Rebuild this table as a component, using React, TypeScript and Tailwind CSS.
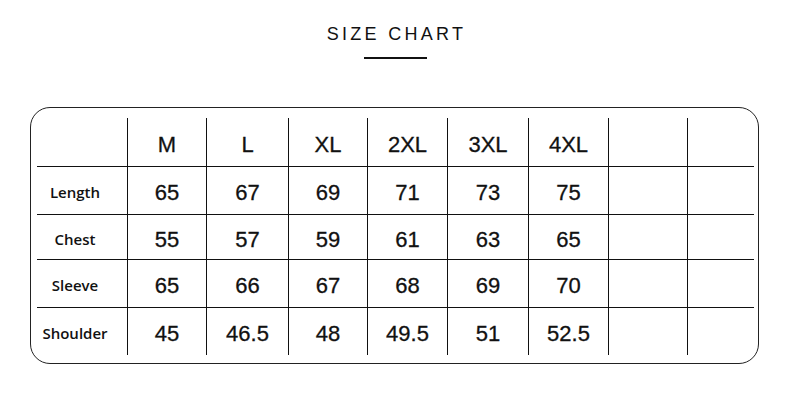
const sizes = ['M', 'L', 'XL', '2XL', '3XL', '4XL', '', ''];

const rows = [
  { label: 'Length', values: ['65', '67', '69', '71', '73', '75', '', ''], h: 'h-[48px]' },
  { label: 'Chest', values: ['55', '57', '59', '61', '63', '65', '', ''], h: 'h-[45px]' },
  { label: 'Sleeve', values: ['65', '66', '67', '68', '69', '70', '', ''], h: 'h-[48px]' },
  { label: 'Shoulder', values: ['45', '46.5', '48', '49.5', '51', '52.5', '', ''], h: 'h-[48px]' },
];

const num =
  "font-['Liberation_Sans',Arial,sans-serif] text-[22px] text-[#111] pt-[5px] [-webkit-text-stroke:0.3px_#111]";
const lab = "font-['Open_Sans',sans-serif] text-[15px] font-semibold text-[#111] pt-[5px]";

export default function App() {
  return (
    <div className="flex h-[408px] w-[790px] flex-col items-center bg-white">
      <div className="mt-[22px] flex flex-col items-center">
        <h1 className="pl-[3px] font-['Liberation_Sans',Arial,sans-serif] text-[18px] leading-[24px] tracking-[3.3px] text-[#111]">
          SIZE CHART
        </h1>
        <div className="mt-[11px] h-[1.5px] w-[63px] bg-[#111]" />
      </div>

      <div className="mt-[48px] ml-[-1px] h-[257px] w-[729px] rounded-[20px] border-[1.5px] border-[#222] pt-[10px] pl-[6px]">
        <div className="grid grid-cols-[90px_79px_82px_79px_80px_81px_80px_79px_67px]">
          <div className="h-[48px]" />
          {sizes.map((s, i) => (
            <div
              key={'h' + i}
              className={`flex h-[48px] items-center justify-center border-l border-[#111] ${num}`}
            >
              {s}
            </div>
          ))}
          {rows.map((r) =>
            [
              <div
                key={r.label}
                className={`flex ${r.h} items-center justify-center border-t border-[#111] pr-[14px] ${lab}`}
              >
                {r.label}
              </div>,
              ...r.values.map((v, i) => (
                <div
                  key={r.label + i}
                  className={`flex ${r.h} items-center justify-center border-t border-l border-[#111] ${num}`}
                >
                  {v}
                </div>
              )),
            ]
          )}
        </div>
      </div>
    </div>
  );
}
